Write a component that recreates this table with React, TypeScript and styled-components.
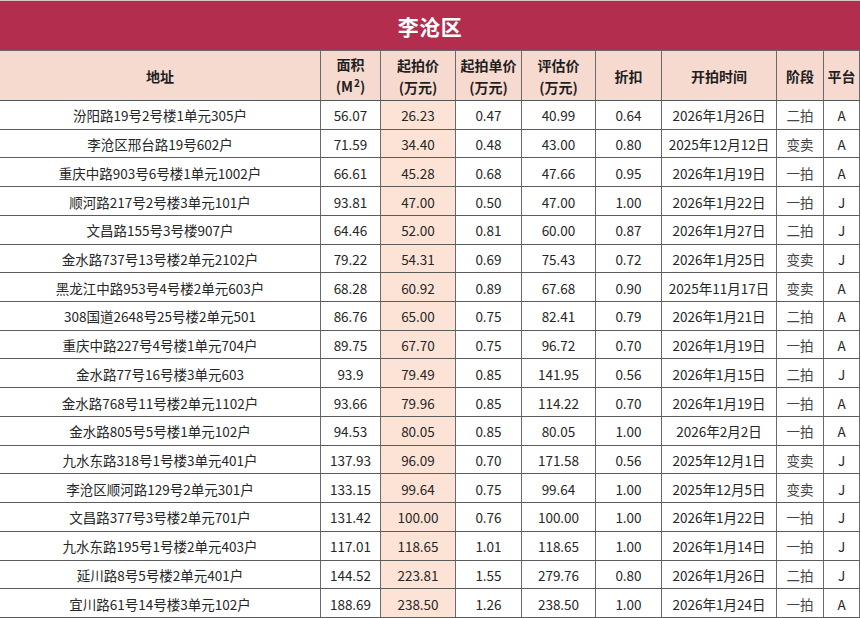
import React from "react";
import styled, { createGlobalStyle } from "styled-components";

const GlobalStyle = createGlobalStyle`
  html, body { margin: 0; padding: 0; background: #ffffff; }
  body { font-family: "Noto Sans CJK SC", "Noto Sans", sans-serif; color: #262626; }
  * { box-sizing: border-box; }
`;

const COLS = "321px 60px 75px 66px 74px 66px 115px 47px 36px";

const Sheet = styled.div`
  width: 860px;
  display: flex;
  flex-direction: column;
`;

const Title = styled.div`
  height: 50px;
  border-top: 1px solid #d9c6cb;
  background: #b32d4e;
  color: #ffffff;
  font-size: 21px;
  font-weight: 700;
  display: flex;
  align-items: center;
  justify-content: center;
  letter-spacing: 0.5px;
`;

const HeaderRow = styled.div`
  display: grid;
  grid-template-columns: ${COLS};
  height: 51px;
  background: #f7dacf;
  border-top: 1px solid #6a6a6a;
  border-bottom: 1px solid #555555;
`;

const HeadCell = styled.div`
  display: flex;
  flex-direction: column;
  align-items: center;
  justify-content: center;
  border-right: 1px solid #6a6a6a;
  font-size: 14px;
  font-weight: 700;
  line-height: 22px;
  color: #1f1f1f;
  white-space: nowrap;
`;

const Sup = styled.span`
  font-size: 10px;
  position: relative;
  top: -5px;
  margin-left: 1px;
`;

const Row = styled.div`
  display: grid;
  grid-template-columns: ${COLS};
  height: 28.72px;
  border-bottom: 1px solid #5c5c5c;
`;

const Cell = styled.div<{ $hl?: boolean; $soft?: boolean }>`
  display: flex;
  align-items: center;
  justify-content: center;
  border-right: 1px solid #6a6a6a;
  background: ${(p) => (p.$hl ? "#fce3d6" : "#ffffff")};
  font-size: 13.5px;
  color: ${(p) => (p.$soft ? "#444444" : "#262626")};
  white-space: nowrap;
  padding-top: 1px;
`;

const headers: React.ReactNode[][] = [
  ["地址"],
  ["面积", <>(M<Sup>2</Sup>)</>],
  ["起拍价", "(万元)"],
  ["起拍单价", "(万元)"],
  ["评估价", "(万元)"],
  ["折扣"],
  ["开拍时间"],
  ["阶段"],
  ["平台"],
];

const rows: string[][] = [
  ["汾阳路19号2号楼1单元305户", "56.07", "26.23", "0.47", "40.99", "0.64", "2026年1月26日", "二拍", "A"],
  ["李沧区邢台路19号602户", "71.59", "34.40", "0.48", "43.00", "0.80", "2025年12月12日", "变卖", "A"],
  ["重庆中路903号6号楼1单元1002户", "66.61", "45.28", "0.68", "47.66", "0.95", "2026年1月19日", "一拍", "A"],
  ["顺河路217号2号楼3单元101户", "93.81", "47.00", "0.50", "47.00", "1.00", "2026年1月22日", "一拍", "J"],
  ["文昌路155号3号楼907户", "64.46", "52.00", "0.81", "60.00", "0.87", "2026年1月27日", "二拍", "J"],
  ["金水路737号13号楼2单元2102户", "79.22", "54.31", "0.69", "75.43", "0.72", "2026年1月25日", "变卖", "J"],
  ["黑龙江中路953号4号楼2单元603户", "68.28", "60.92", "0.89", "67.68", "0.90", "2025年11月17日", "变卖", "A"],
  ["308国道2648号25号楼2单元501", "86.76", "65.00", "0.75", "82.41", "0.79", "2026年1月21日", "二拍", "A"],
  ["重庆中路227号4号楼1单元704户", "89.75", "67.70", "0.75", "96.72", "0.70", "2026年1月19日", "一拍", "A"],
  ["金水路77号16号楼3单元603", "93.9", "79.49", "0.85", "141.95", "0.56", "2026年1月15日", "二拍", "J"],
  ["金水路768号11号楼2单元1102户", "93.66", "79.96", "0.85", "114.22", "0.70", "2026年1月19日", "一拍", "A"],
  ["金水路805号5号楼1单元102户", "94.53", "80.05", "0.85", "80.05", "1.00", "2026年2月2日", "一拍", "A"],
  ["九水东路318号1号楼3单元401户", "137.93", "96.09", "0.70", "171.58", "0.56", "2025年12月1日", "变卖", "J"],
  ["李沧区顺河路129号2单元301户", "133.15", "99.64", "0.75", "99.64", "1.00", "2025年12月5日", "变卖", "J"],
  ["文昌路377号3号楼2单元701户", "131.42", "100.00", "0.76", "100.00", "1.00", "2026年1月22日", "一拍", "J"],
  ["九水东路195号1号楼2单元403户", "117.01", "118.65", "1.01", "118.65", "1.00", "2026年1月14日", "一拍", "J"],
  ["延川路8号5号楼2单元401户", "144.52", "223.81", "1.55", "279.76", "0.80", "2026年1月26日", "二拍", "J"],
  ["宜川路61号14号楼3单元102户", "188.69", "238.50", "1.26", "238.50", "1.00", "2026年1月24日", "一拍", "A"],
];

export default function App() {
  return (
    <>
      <GlobalStyle />
      <Sheet>
        <Title>李沧区</Title>
        <HeaderRow>
          {headers.map((lines, i) => (
            <HeadCell key={i}>
              {lines.map((l, j) => (
                <span key={j}>{l}</span>
              ))}
            </HeadCell>
          ))}
        </HeaderRow>
        {rows.map((r, i) => (
          <Row key={i}>
            {r.map((v, j) => (
              <Cell key={j} $hl={j === 2} $soft={j === 7}>
                {v}
              </Cell>
            ))}
          </Row>
        ))}
      </Sheet>
    </>
  );
}
